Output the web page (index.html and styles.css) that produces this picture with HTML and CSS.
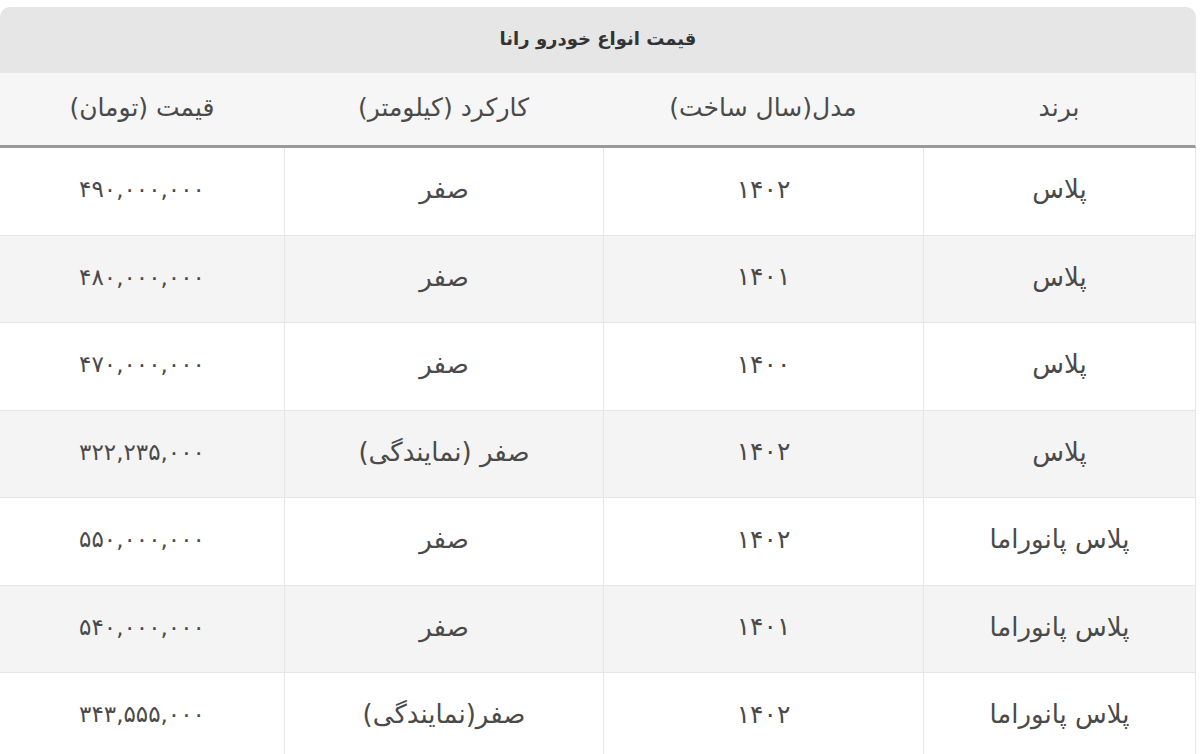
FILE: index.html
```html
<!DOCTYPE html>
<html lang="fa" dir="rtl">
<head>
<meta charset="utf-8">
<link rel="stylesheet" href="styles.css">
</head>
<body>
<div class="wrap">
<table class="price-table">
  <colgroup>
    <col class="c-brand">
    <col class="c-model">
    <col class="c-km">
    <col class="c-price">
  </colgroup>
  <thead>
    <tr class="title-row"><th colspan="4">قیمت انواع خودرو رانا</th></tr>
    <tr class="head-row">
      <th>برند</th>
      <th>مدل(سال ساخت)</th>
      <th>کارکرد (کیلومتر)</th>
      <th>قیمت (تومان)</th>
    </tr>
  </thead>
  <tbody>
    <tr><td>پلاس</td><td class="num">۱۴۰۲</td><td>صفر</td><td class="price">۴۹۰,۰۰۰,۰۰۰</td></tr>
    <tr><td>پلاس</td><td class="num">۱۴۰۱</td><td>صفر</td><td class="price">۴۸۰,۰۰۰,۰۰۰</td></tr>
    <tr><td>پلاس</td><td class="num">۱۴۰۰</td><td>صفر</td><td class="price">۴۷۰,۰۰۰,۰۰۰</td></tr>
    <tr><td>پلاس</td><td class="num">۱۴۰۲</td><td>صفر (نمایندگی)</td><td class="price">۳۲۲,۲۳۵,۰۰۰</td></tr>
    <tr><td>پلاس پانوراما</td><td class="num">۱۴۰۲</td><td>صفر</td><td class="price">۵۵۰,۰۰۰,۰۰۰</td></tr>
    <tr><td>پلاس پانوراما</td><td class="num">۱۴۰۱</td><td>صفر</td><td class="price">۵۴۰,۰۰۰,۰۰۰</td></tr>
    <tr><td>پلاس پانوراما</td><td class="num">۱۴۰۲</td><td>صفر(نمایندگی)</td><td class="price">۳۴۳,۵۵۵,۰۰۰</td></tr>
  </tbody>
</table>
</div>
</body>
</html>
```
FILE: styles.css
```css
html, body {
  margin: 0;
  padding: 0;
  background: #ffffff;
}
body {
  font-family: "DejaVu Sans", "Noto Sans", sans-serif;
  color: #4a4a4a;
}
.wrap {
  padding-top: 7px;
  width: 1196px;
  margin-left: 0;
  margin-right: auto;
  overflow: hidden;
}
.price-table {
  width: 1196px;
  border-collapse: separate;
  border-spacing: 0;
  table-layout: fixed;
  direction: rtl;
}
.c-brand { width: 273px; }
.c-model { width: 320px; }
.c-km { width: 319px; }
.c-price { width: 284px; }
.title-row th {
  background: #e6e6e6;
  height: 66px;
  padding: 0 0 4px 0;
  font-size: 18px;
  font-weight: bold;
  color: #333;
  border-radius: 10px 10px 0 0;
  vertical-align: middle;
  box-sizing: border-box;
}
.head-row th {
  background: #f6f6f6;
  height: 75px;
  padding: 0 0 4px 0;
  font-size: 25px;
  font-weight: normal;
  color: #4a4a4a;
  border-bottom: 3px solid #9a9a9a;
  box-sizing: border-box;
}
.head-row th:first-child { border-right: 1px solid #eaeaea; }
tbody td {
  height: 87.5px;
  padding: 0 0 4px 0;
  text-align: center;
  vertical-align: middle;
  font-size: 26px;
  color: #4a4a4a;
  border-bottom: 1px solid #e6e6e6;
  border-left: 1px solid #e6e6e6;
  box-sizing: border-box;
}
tbody td.num {
  font-size: 25px;
}
tbody td.price {
  font-size: 23px;
}
tbody td:first-child {
  border-right: 1px solid #e6e6e6;
}
tbody td:last-child {
  border-left: none;
}
tbody tr:nth-child(even) td {
  background: #f4f4f4;
}
tbody tr:nth-child(odd) td {
  background: #ffffff;
}
```
